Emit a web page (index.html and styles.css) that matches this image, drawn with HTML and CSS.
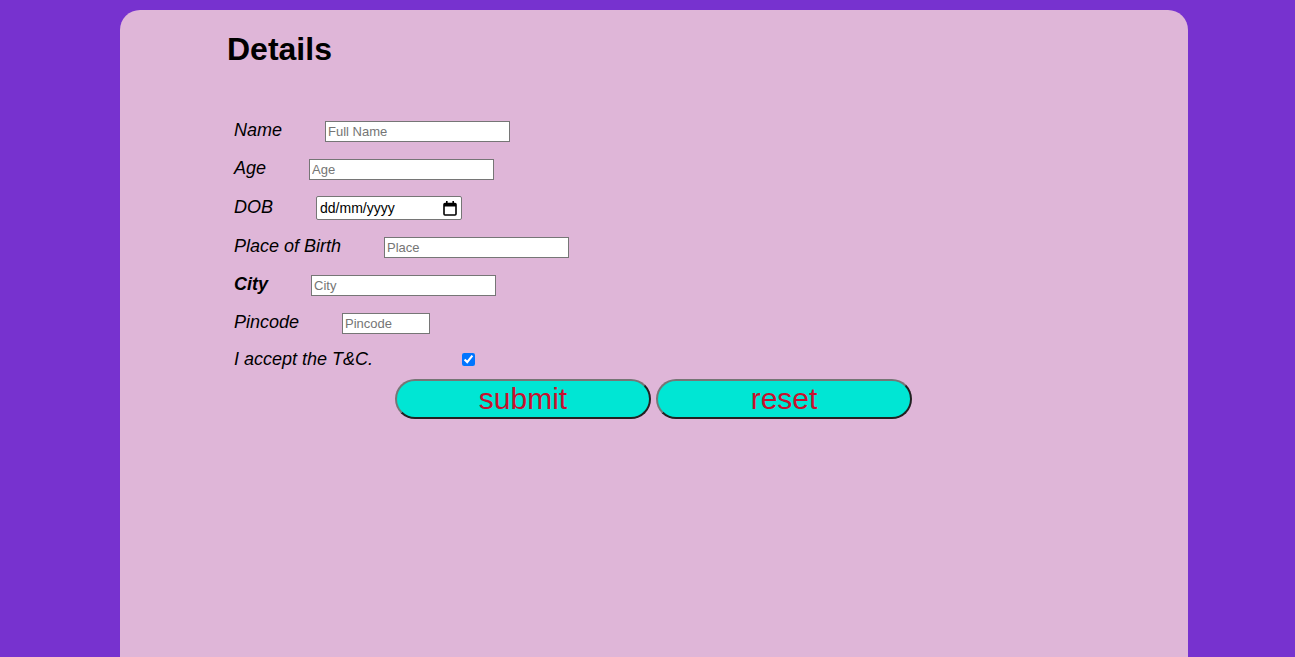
FILE: index.html
```html
<!DOCTYPE html>
<html>
<head>
<meta charset="utf-8">
<link rel="stylesheet" href="styles.css">
</head>
<body>
<div class="card">
  <div class="inner">
    <h1 class="title">Details</h1>
    <form class="form">
      <div class="row"><label class="lbl">Name</label><input class="txt" type="text" placeholder="Full Name"></div>
      <div class="row"><label class="lbl">Age</label><input class="txt" type="text" placeholder="Age"></div>
      <div class="row row-dob"><label class="lbl">DOB</label><div class="date"><span class="date-text">dd/mm/yyyy</span><svg class="cal" width="14" height="16" viewBox="0 0 14 16"><rect x="1" y="3.5" width="12" height="11.5" fill="none" stroke="#000" stroke-width="1.6" rx="1"/><rect x="1" y="3.5" width="12" height="3" fill="#000"/><rect x="3" y="1" width="1.6" height="3" fill="#000"/><rect x="9.4" y="1" width="1.6" height="3" fill="#000"/></svg></div></div>
      <div class="row"><label class="lbl">Place of Birth</label><input class="txt" type="text" placeholder="Place"></div>
      <div class="row"><label class="lbl lbl-bold">City</label><input class="txt" type="text" placeholder="City"></div>
      <div class="row"><label class="lbl">Pincode</label><input class="txt pin" type="text" placeholder="Pincode"></div>
      <div class="row row-tc"><label class="lbl lbl-tc">I accept the T&amp;C.</label><input class="chk" type="checkbox" checked></div>
    </form>
  </div>
  <div class="buttons">
    <button class="btn" type="button">submit</button>
    <button class="btn" type="button">reset</button>
  </div>
</div>
</body>
</html>
```
FILE: styles.css
```css
html, body {
  margin: 0;
  padding: 0;
}
body {
  background: #7732cf;
  font-family: "Liberation Sans", Arial, sans-serif;
  height: 657px;
  overflow: hidden;
}
.card {
  margin: 10px 107px 0 120px;
  background: #dfb6d8;
  border-radius: 20px 20px 0 0;
  height: 647px;
}
.inner {
  padding-left: 107px;
  padding-top: 21px;
}
.title {
  margin: 0;
  font-size: 32px;
  font-weight: bold;
  line-height: 37px;
  color: #000;
}
.form {
  margin-top: 52px;
  padding-left: 7px;
  display: flex;
  flex-direction: column;
  gap: 16px;
}
.row {
  display: flex;
  align-items: center;
  height: 22px;
}
.row-dob {
  height: 24px;
}
.row-tc {
  height: 20px;
}
.lbl {
  font-size: 18px;
  font-style: italic;
  margin-right: 43px;
  margin-bottom: 2px;
  color: #000;
}
.lbl-bold {
  font-weight: bold;
}
.lbl-tc {
  margin-right: 89px;
}
.txt {
  width: 185px;
  height: 21px;
  box-sizing: border-box;
  border: 1px solid #767676;
  padding: 1px 2px;
  font-family: "Liberation Sans", Arial, sans-serif;
  font-size: 13px;
  margin: 0;
  background: #fff;
}
.pin {
  width: 88px;
}
.date {
  width: 146px;
  height: 24px;
  box-sizing: border-box;
  border: 1px solid #767676;
  border-radius: 2px;
  background: #fff;
  display: flex;
  align-items: center;
  justify-content: space-between;
  padding: 0 4px 0 3px;
}
.date-text {
  font-family: "Liberation Sans", Arial, sans-serif;
  font-size: 14px;
  color: #000;
}
.cal {
  display: block;
}
.chk {
  width: 13px;
  height: 13px;
  margin: 0 0 2px 0;
}
.buttons {
  display: flex;
  justify-content: center;
  gap: 5px;
  margin-top: 9px;
  padding-right: 1px;
}
.btn {
  width: 256px;
  height: 40px;
  box-sizing: border-box;
  background: #00e6d4;
  color: #c8102e;
  font-family: "Liberation Sans", Arial, sans-serif;
  font-size: 30px;
  line-height: 1;
  border: 2px outset #767676;
  border-radius: 20px;
  padding: 0;
}
```
